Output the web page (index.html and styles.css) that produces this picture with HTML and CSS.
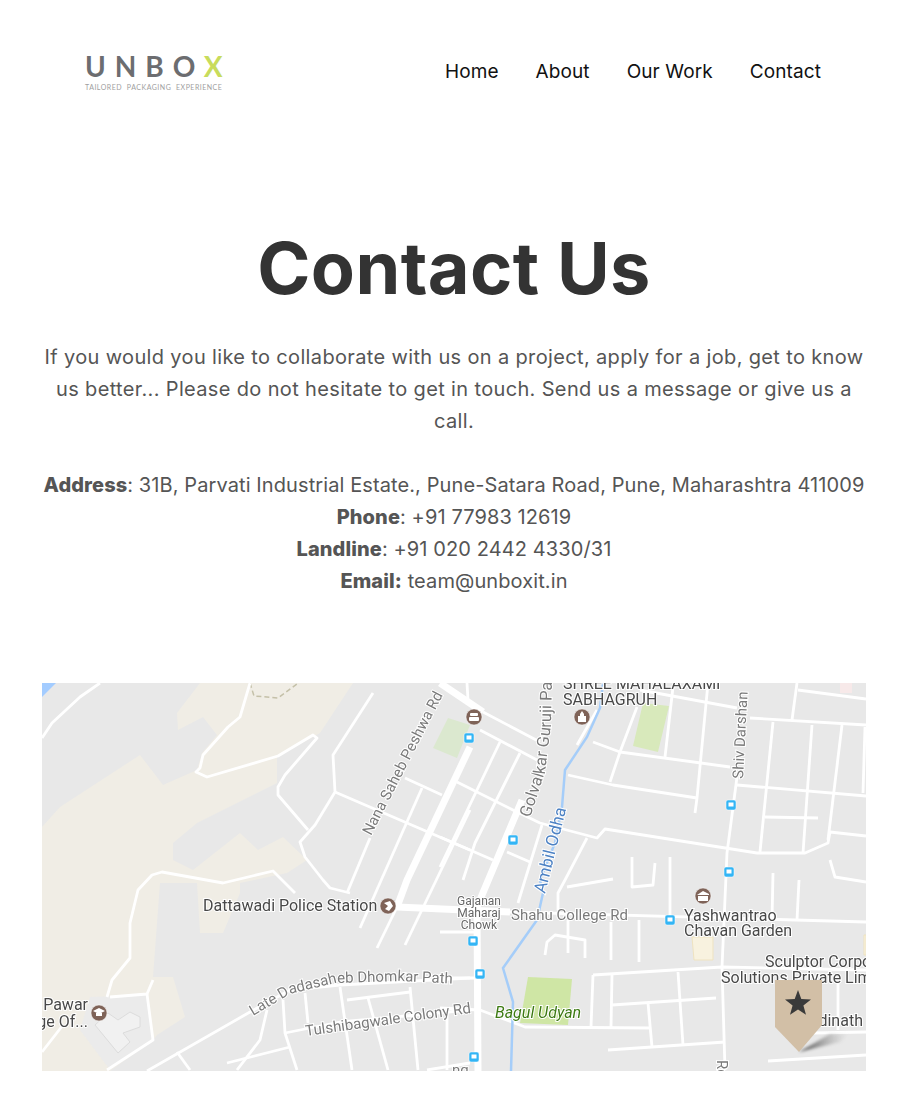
FILE: index.html
```html
<!DOCTYPE html>
<html>
<head>
    <meta charset="utf-8">
    <title>Contact Us</title>
    <link rel="stylesheet" href="styles.css">
</head>
<body>
    <header class="site-header">
        <a class="logo" href="#">
            <span class="logo-word">UNBO<span class="logo-x">X</span></span>
            <span class="logo-tag">TAILORED PACKAGING EXPERIENCE</span>
        </a>
        <nav class="navbar">
            <a href="#">Home</a>
            <a href="#">About</a>
            <a href="#">Our Work</a>
            <a href="#">Contact</a>
        </nav>
    </header>

    <main class="contact">
        <h1>Contact Us</h1>
        <p class="intro">If you would you like to collaborate with us on a project, apply for a job, get to know us better... Please do not hesitate to get in touch. Send us a message or give us a call.</p>
        <p class="details">
            <b>Address</b>: 31B, Parvati Industrial Estate., Pune-Satara Road, Pune, Maharashtra 411009<br>
            <b>Phone</b>: +91 77983 12619<br>
            <b>Landline</b>: +91 020 2442 4330/31<br>
            <b>Email:</b> team@unboxit.in
        </p>

        <svg class="map" viewBox="42 683 824 388" xmlns="http://www.w3.org/2000/svg">
            <defs>
                <linearGradient id="pin-shadow" x1="0" y1="0" x2="1" y2="0">
                    <stop offset="0" stop-color="#444"/>
                    <stop offset="1" stop-color="#999" stop-opacity="0"/>
                </linearGradient>
                <path id="golvalkar" d="M530 818 L545 772 L551 725 L552 680"/>
                <path id="dadasaheb" d="M253 1016 L290 994 L335 983 L400 981 L480 985"/>
            </defs>

            <rect class="ground" x="42" y="683" width="824" height="388"/>

            <!-- land + water -->
            <polygon class="beige" points="200,683 177,713 178,730 203,717 217,735 202,753 197,770 163,785 140,755 60,807 42,827 42,1071 110,1071 153,1040 157,1035 185,1017 173,977 153,977 160,883 197,883 200,933 223,933 240,893 240,883 287,873 307,860 283,837 258,850 240,833 193,870 173,860 173,843 197,823 277,783 277,757 320,733 353,683"/>
            <polygon class="campus" points="90,997 147,995 153,1040 110,1070 80,1030"/>
            <polygon class="building" points="95,1025 118,1053 130,1042 123,1033 140,1027 140,1017 130,1012 118,1020 108,1013"/>
            <polygon class="water" points="42,683 56,683 42,697"/>
            <polygon class="park-a" points="448,718 470,725 457,758 433,748"/>
            <polygon class="park-b" points="643,703 669,706 658,752 633,746"/>
            <polygon class="park-c" points="528,977 572,979 568,1025 520,1023"/>
            <polygon class="garden" points="692,937 713,937 713,960 694,960"/>
            <polygon class="pink" points="840,683 852,683 852,693 840,693"/>
            <polygon class="garden" points="864,935 866,935 866,955 864,955"/>
            <polyline class="trail" points="250,683 254,696 278,698 297,684"/>

            <!-- thin roads -->
            <g class="road">
                <polyline points="42,738 52,723 80,697 100,683"/>
                <polyline points="250,683 240,717 228,727 203,755 200,768 196,772 207,777 278,756 313,735 317,738 285,775 278,787 278,795 308,830"/>
                <polyline points="373,693 333,755 335,792 315,825 300,842 305,857 323,880 330,888 350,893"/>
                <polyline points="335,792 407,823 470,850"/>
                <polyline points="457,782 513,810 540,823 597,838 605,829 757,853 805,853 828,843 830,832 866,836"/>
                <polyline points="422,788 360,928"/>
                <polyline points="370,838 347,893"/>
                <polyline points="470,810 405,945"/>
                <polyline points="397,907 377,948"/>
                <polyline points="405,778 442,795"/>
                <polyline points="480,730 537,760"/>
                <polyline points="440,837 493,860"/>
                <polyline points="500,742 453,840 440,867"/>
                <polyline points="520,753 475,843 463,880"/>
                <polyline points="542,825 525,880 518,903"/>
                <polyline points="587,838 565,880 558,893 558,910"/>
                <polyline points="507,852 530,862"/>
                <polyline points="577,745 597,710"/>
                <polyline points="593,742 620,752 730,767"/>
                <polyline points="637,707 620,752 610,782"/>
                <polyline points="568,775 613,785 697,798"/>
                <polyline points="708,683 697,798 695,813"/>
                <polyline points="673,687 665,757"/>
                <polyline points="737,777 727,853 722,967 725,1070"/>
                <polyline points="737,785 866,796"/>
                <polyline points="773,722 760,852"/>
                <polyline points="812,725 803,853"/>
                <polyline points="842,725 828,840"/>
                <polyline points="865,727 863,793"/>
                <polyline points="797,683 792,720"/>
                <polyline points="750,718 866,725"/>
                <polyline points="640,690 737,708"/>
                <polyline points="798,690 866,699"/>
                <polyline points="765,817 818,818"/>
                <polyline points="467,683 468,700"/>
                <polyline points="567,887 613,879"/>
                <polyline points="632,857 632,887 653,885 655,863"/>
                <polyline points="670,857 670,920"/>
                <polyline points="773,873 772,920"/>
                <polyline points="799,880 797,920"/>
                <polyline points="830,860 835,877 866,882"/>
                <polyline points="568,920 568,953"/>
                <polyline points="545,955 547,942 555,935 585,940 585,958"/>
                <polyline points="611,922 611,960"/>
                <polyline points="639,920 639,962"/>
                <polyline points="510,912 866,922"/>
                <polyline points="593,975 722,967 866,970"/>
                <polyline points="593,975 591,1027"/>
                <polyline points="612,975 611,1027"/>
                <polyline points="678,972 683,1045"/>
                <polyline points="612,1005 716,998"/>
                <polyline points="648,1003 652,1047"/>
                <polyline points="608,1050 725,1042"/>
                <polyline points="440,1008 480,1010 525,1027 650,1028"/>
                <polyline points="440,978 480,978"/>
                <polyline points="768,1061 866,1055"/>
                <polyline points="813,1033 866,1032"/>
                <polyline points="838,983 838,1030"/>
                <polyline points="147,1071 250,1012 290,990 340,985 470,978"/>
                <polyline points="283,1000 285,1033 297,1070"/>
                <polyline points="305,993 308,1023"/>
                <polyline points="340,987 352,1070"/>
                <polyline points="368,998 388,1070"/>
                <polyline points="410,987 418,1070"/>
                <polyline points="447,1010 447,1070"/>
                <polyline points="347,1000 410,992"/>
                <polyline points="285,1033 340,1022 470,1010"/>
                <polyline points="267,1010 260,1040 237,1070"/>
                <polyline points="177,1052 190,1070"/>
                <polyline points="227,1063 290,1047"/>
                <polyline points="427,1070 470,1063"/>
                <polyline points="110,997 147,994 153,980"/>
                <polyline points="147,994 153,1040 107,1070"/>
                <polyline points="107,997 112,980 130,958 130,923 138,890 152,875 162,872 223,883 273,871 295,893"/>
                <polyline points="42,1052 63,1025"/>
                <polyline points="440,932 480,932"/>
            </g>

            <!-- main roads -->
            <g class="road-wide">
                <polyline points="470,747 407,880 397,907"/>
                <polyline points="440,683 483,712"/>
                <polyline points="522,800 477,907 478,1071"/>
                <polyline points="397,907 510,912"/>
            </g>
            <polyline class="road" points="483,712 540,742"/>

            <polyline class="river" points="603,683 600,708 587,737 565,770 562,807 555,843 540,880 543,893 537,920 503,968 513,1002 511,1071"/>

            <!-- labels -->
            <g class="label-road">
                <text transform="translate(371 836) rotate(-63)">Nana Saheb Peshwa Rd</text>
                <text class="label-wide"><textPath href="#golvalkar">Golvalkar Guruji Pa</textPath></text>
                <text transform="translate(743 779) rotate(-87)">Shiv Darshan</text>
                <text x="511" y="920">Shahu College Rd</text>
                <text><textPath href="#dadasaheb">Late Dadasaheb Dhomkar Path</textPath></text>
                <text transform="translate(306 1036) rotate(-8)">Tulshibagwale Colony Rd</text>
                <text transform="translate(717 1060) rotate(90)">Rd</text>
                <text x="452" y="1075">ng</text>
            </g>
            <text class="label-river" transform="translate(545 894) rotate(-76)">Ambil Odha</text>
            <g class="label-place">
                <text x="563" y="689">SHREE MAHALAXAMI</text>
                <text x="563" y="705">SABHAGRUH</text>
                <text x="203" y="911">Dattawadi Police Station</text>
                <text x="684" y="921">Yashwantrao</text>
                <text x="684" y="936">Chavan Garden</text>
                <text x="765" y="967">Sculptor Corporate</text>
                <text x="721" y="983">Solutions Private Limited</text>
                <text x="808" y="1026">Adinath</text>
                <text class="label-end" x="88" y="1010">Pawar</text>
                <text class="label-end" x="88" y="1027">College Of...</text>
            </g>
            <g class="label-chowk">
                <text x="479" y="905">Gajanan</text>
                <text x="479" y="917">Maharaj</text>
                <text x="479" y="929">Chowk</text>
            </g>
            <text class="label-park" x="495" y="1018">Bagul Udyan</text>

            <!-- bus stops -->
            <g class="bus">
                <rect x="464" y="733" width="10" height="10" rx="2"/>
                <rect x="508" y="835" width="10" height="10" rx="2"/>
                <rect x="726" y="800" width="10" height="10" rx="2"/>
                <rect x="724" y="867" width="10" height="10" rx="2"/>
                <rect x="468" y="936" width="10" height="10" rx="2"/>
                <rect x="475" y="969" width="10" height="10" rx="2"/>
                <rect x="665" y="915" width="10" height="10" rx="2"/>
                <rect x="469" y="1052" width="10" height="10" rx="2"/>
            </g>
            <g class="bus-glyph">
                <rect x="466.500" y="735.500" width="5" height="4"/>
                <rect x="510.500" y="837.500" width="5" height="4"/>
                <rect x="728.500" y="802.500" width="5" height="4"/>
                <rect x="726.500" y="869.500" width="5" height="4"/>
                <rect x="470.500" y="938.500" width="5" height="4"/>
                <rect x="477.500" y="971.500" width="5" height="4"/>
                <rect x="667.500" y="917.500" width="5" height="4"/>
                <rect x="471.500" y="1054.500" width="5" height="4"/>
            </g>

            <!-- place icons -->
            <g class="poi">
                <circle cx="474" cy="717" r="8"/>
                <circle cx="582" cy="717" r="8"/>
                <circle cx="388" cy="906" r="8"/>
                <circle cx="99" cy="1013" r="8"/>
                <circle cx="703" cy="896" r="8"/>
            </g>
            <g class="poi-glyph">
                <rect x="470" y="713" width="8" height="3" rx="1"/>
                <rect x="469" y="717" width="10" height="4" rx="1"/>
                <polygon points="582,711 584,714 584,716 586,716 586,722 578,722 578,716 580,716 580,714"/>
                <path d="M384 903 L390 901 L393 906 L389 911 L385 909 L388 906 Z"/>
                <polygon points="93,1011 99,1008 105,1011 99,1014"/>
                <rect x="96" y="1013" width="6" height="3"/>
                <polygon points="703,891 709,894 709,895 697,895"/>
                <rect x="698" y="896" width="10" height="5"/>
            </g>

            <!-- pin -->
            <polygon class="pin-shadow" points="799,1052 830,1034 848,1034 840,1042"/>
            <polygon class="pin" points="775,980 822,980 822,1025 799,1052 775,1027"/>
            <polygon class="pin-star" points="798,990 801.300,999 811,999.400 803.400,1005.400 806,1014.800 798,1009.400 790,1014.800 792.600,1005.400 785,999.400 794.700,999"/>
        </svg>
    </main>
</body>
</html>
```
FILE: styles.css
```css
body {
    font-family: 'Inter', 'Liberation Sans', sans-serif;
    margin: 0;
    padding: 0;
    background-color: #ffffff;
    color: #555555;
}

a {
    text-decoration: none;
}

.site-header {
    display: flex;
    justify-content: space-between;
    align-items: flex-start;
    padding: 51px 87px 0 85px;
    height: 87px;
}

.logo {
    display: flex;
    flex-direction: column;
    width: 140px;
}

.logo-word {
    font-family: 'Lato', sans-serif;
    font-weight: 700;
    font-size: 28px;
    line-height: 30px;
    letter-spacing: 9px;
    color: #6c6d70;
    white-space: nowrap;
}

.logo-x {
    color: #c8dc5c;
}

.logo-tag {
    font-family: 'Lato', sans-serif;
    font-size: 7px;
    line-height: 10px;
    margin-top: 1px;
    letter-spacing: .5px;
    word-spacing: 2.500px;
    color: #a0a0a0;
    white-space: nowrap;
}

.navbar {
    display: flex;
    gap: 37px;
    padding-top: 9px;
}

.navbar a {
    color: #111111;
    font-size: 19px;
    line-height: 24px;
    letter-spacing: .1px;
}

.contact {
    padding: 0 42px;
    text-align: center;
}

.contact h1 {
    margin: 0;
    padding-top: 87px;
    font-size: 72px;
    line-height: 86px;
    font-weight: 700;
    letter-spacing: .4px;
    color: #333333;
}

.contact p {
    margin: 0;
    font-size: 20px;
    line-height: 32px;
}

.intro {
    padding-top: 30px;
    letter-spacing: .35px;
}

.details {
    padding-top: 32px;
    letter-spacing: .1px;
    white-space: nowrap;
}

.details b {
    font-weight: 800;
}

.map {
    display: block;
    width: 824px;
    height: 388px;
    margin-top: 86px;
    filter: blur(.4px);
}

/* map colours */
.ground { fill: #e8e8e8; }
.beige { fill: #f0ede5; }
.campus { fill: #ebebeb; }
.building { fill: #f1f1f1; stroke: #dcdcdc; }
.water { fill: #a3ccff; }
.park-a { fill: #dbe8cf; }
.park-b { fill: #d8e9bb; }
.park-c { fill: #cfe6a5; }
.garden { fill: #f8f2df; stroke: #efe3c0; }
.pink { fill: #f7e9e9; }
.trail { fill: none; stroke: #c4c0a8; stroke-width: 1.500; stroke-dasharray: 5 3; }
.road, .road polyline { fill: none; stroke: #ffffff; stroke-width: 2.800; stroke-linejoin: round; }
.road-wide polyline { fill: none; stroke: #ffffff; stroke-width: 7; }
.river { fill: none; stroke: #a5cdf9; stroke-width: 2.500; }

.map text {
    font-family: 'Roboto', sans-serif;
    stroke: #ffffff;
    stroke-width: 2px;
    paint-order: stroke;
    text-anchor: start;
}

.label-road text { font-size: 15px; fill: #7a7a7a; }
.label-road .label-wide { font-size: 16.500px; }
.label-river { font-size: 17px; fill: #4d82c4; }
.label-place text { font-size: 16px; fill: #484848; }
.map .label-end { text-anchor: end; }
.label-chowk text { font-size: 12px; fill: #666666; }
.map .label-chowk text { text-anchor: middle; }
.label-park { font-size: 16px; font-style: italic; fill: #3d7a13; }

.bus rect { fill: #33b5f5; stroke: #ffffff; stroke-width: .5; }
.bus-glyph rect { fill: #ffffff; }
.poi circle { fill: #7f6358; stroke: #ffffff; stroke-width: .5; }
.poi-glyph * { fill: #ffffff; }
.pin { fill: #d2bfa6; }
.pin-star { fill: #3a3a3a; }
.pin-shadow { fill: url(#pin-shadow); filter: blur(1.500px); }
```
